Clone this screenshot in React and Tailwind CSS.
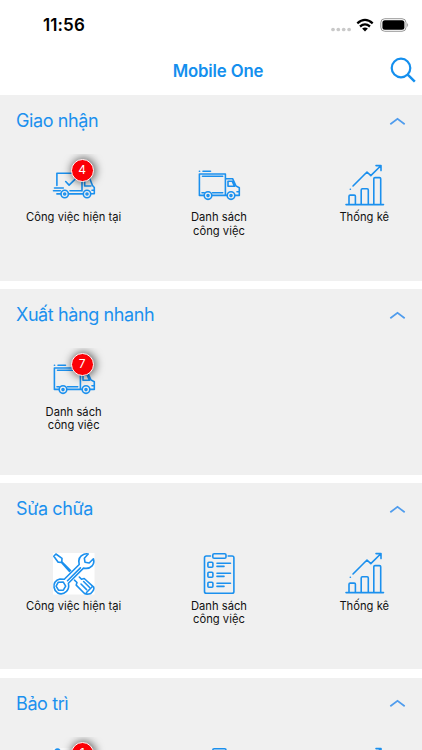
import React from 'react';

function Svg({ children }) {
  return (
    <svg viewBox="0 0 42 42" className="block h-[42px] w-[42px] overflow-visible" fill="none" stroke="#1b90ee" strokeWidth="1.6" strokeLinecap="round" strokeLinejoin="round">
      {children}
    </svg>
  );
}

function Delivery() {
  return (
    <Svg>
      <path d="M3.900 20.500V8.200H29M29 12v14M30 13h6.500l3 7.500 1.800 2v6.300h-3.400M31.700 16v5h6.200M12.700 16.500l3.400 3.600 6.400-6.200M1.500 23h8.800M.5 25.700h6.800M3.900 28.900h3.900M15.600 28.900h14.200M17 25.800h12M39 25.200h2" />
      <circle cx="11.700" cy="29" r="3.700" /><circle cx="11.700" cy="29" r="1" />
      <circle cx="34" cy="29" r="3.700" /><circle cx="34" cy="29" r="1" />
    </Svg>
  );
}

function Truck() {
  return (
    <Svg>
      <path d="M1.400 6.300h.2M5 6.300h7.500M6 30.400H1.400V9h26v21.400H14M4.500 11.200h20.200M4 27.700h2.200M14.500 27.700h10.200M27.400 13.700h7.200l3.300 7.200 3.400 1.900v7.600h-4.200M29 30.400h-1.600M30 16.300h4.200l2.200 5H30zM39 26.700h2" />
      <circle cx="10" cy="30.600" r="3.800" /><circle cx="10" cy="30.600" r="1" />
      <circle cx="33" cy="30.600" r="3.800" /><circle cx="33" cy="30.600" r="1" />
    </Svg>
  );
}

function Chart() {
  return (
    <Svg>
      <path d="M3 39.600h37.500M6 39.600V31.300q0-1.200 1.200-1.200h4q1.200 0 1.200 1.200v8.300M18.200 39.600V24.900q0-1.200 1.200-1.200h4.700q1.200 0 1.200 1.200v14.700M30.800 39.600V13.800q0-1.200 1.200-1.200h4.500q1.200 0 1.200 1.200v25.800M7.300 24.300h.1M10 21 24 7l3.800 3.600L37.800.8M33 .6h5v5" />
    </Svg>
  );
}

function Clipboard() {
  return (
    <Svg>
      <path d="M12.500 3H8.300q-1.800 0-1.800 1.800v33.600q0 1.800 1.800 1.800h25.800q1.800 0 1.800-1.800V4.800Q35.900 3 34.100 3H30.200" />
      <rect x="14.800" y=".7" width="13.200" height="4.600" rx="1.300" />
      {[11.7, 21.7, 31.7].map((y) => (
        <g key={y}>
          <rect x="9.900" y={y - 2.5} width="5" height="5" rx="1" />
          <path d={`M19 ${y - 1.5}h13.500M19 ${y + 1.7}h7`} />
        </g>
      ))}
    </Svg>
  );
}

function Tools() {
  return (
    <Svg>
      <rect width="41.500" height="41.500" fill="white" stroke="none" />
      <path d="M17.600 17.500 8.800 8.700l.2-3.400L2.900 1 .8 3.200l4.400 6.100 3.300.1 8 9.100M21.500 27.200l2.500 2.300-.8 2.600 8.300 8.400q2.500 1.200 6.300-.1 3.900-3.300 2.900-6.300L31.200 25.500l-2.700.8-2.200-2.300M28 31l5.600 5.600M30.600 28.500l5.800 5.800M33.500 39.500l5.900-6" />
      <path d="M1.100 34.500Q.2 28 7 26.100q2.700 0 4.300.1L26.200 11.500Q24.400 3.600 31 1.200q2.200-.8 4.200-.2L31.300 5.200l.7 4 4.200.8 4.200-4.200q1.300 4-1.300 7.100-3.200 3.400-8.600 2.200L15.400 30.300q1.100 5-1.900 8.100-4.500 4.100-9.100 1.300-2.700-1.800-3.300-5.200z" fill="white" />
      <path d="m5.300 29.200 5-.1 2.400 4-2.400 4.100H5.500l-2.400-4zM14.500 27.700 27.400 14.900" />
    </Svg>
  );
}

function Maintenance() {
  return (
    <Svg>
      <rect width="42" height="42" fill="#f7f7f7" stroke="none" />
      <path d="M2 4.500a2.600 2.600 0 1 1 5 0L18 17M2 4.500l12 15" strokeWidth="1.800" />
    </Svg>
  );
}

function SearchIcon() {
  return (
    <svg className="h-[26px] w-[26px]" viewBox="0 0 26 26" fill="none" stroke="#148fee" strokeWidth="2.200">
      <circle cx="11" cy="11" r="9.300" />
      <path d="m17.700 17.700 7.100 6.900" strokeWidth="2.500" />
    </svg>
  );
}

function StatusIcons() {
  return (
    <svg className="h-4 w-[80px]" viewBox="0 0 80 16">
      <g fill="#c9c9c9">
        <circle cx="3" cy="12.500" r="1.850" /><circle cx="8.300" cy="12.500" r="1.850" />
        <circle cx="13.700" cy="12.500" r="1.850" /><circle cx="19.100" cy="12.500" r="1.850" />
      </g>
      <g fill="none" stroke="black" strokeWidth="2.300">
        <path d="M27.300 6.300Q35-.5 42.700 6.300M30 9.500q5-4.200 10 0" />
      </g>
      <path d="M32.100 11.500q2.900-2 5.800 0L35 14.400z" />
      <rect x="50.800" y="1.700" width="25.200" height="12.600" rx="4" fill="none" stroke="#999" />
      <rect x="52.400" y="3.300" width="22" height="9.400" rx="2.500" />
      <path d="M77.200 6q1.900 2 0 4z" fill="#999" />
    </svg>
  );
}

const current = 'Công việc hiện tại';
const list = 'Danh sách\ncông việc';
const stats = 'Thống kê';

const sections = [
  { title: 'Giao nhận', items: [[Delivery, current, 4], [Truck, list], [Chart, stats]] },
  { title: 'Xuất hàng nhanh', items: [[Truck, list, 7]] },
  { title: 'Sửa chữa', items: [[Tools, current], [Clipboard, list], [Chart, stats]] },
  { title: 'Bảo trì', items: [[Maintenance, '', 1], [Clipboard, ''], [Chart, '']] },
];

function Item({ item: [Icon, label, count] }) {
  return (
    <div className="flex w-[145.300px] shrink-0 flex-col items-center">
      <div className="relative">
        <Icon />
        {count && (
          <div className="absolute -top-[11px] left-[4px] h-[50px] w-[56px] overflow-hidden">
            <div className="ml-[14px] mt-[5px] flex h-[23px] w-[23px] items-center justify-center rounded-full border border-white bg-[#fb0006] pb-px text-[12px] leading-none text-white shadow-[1px_0px_9px_1px_rgba(0,0,0,0.6)]">{count}</div>
          </div>
        )}
      </div>
      <div className="mt-[4.400px] whitespace-pre text-center text-[11.200px] leading-[13.300px] tracking-[0.020px] text-[#111]">{label}</div>
    </div>
  );
}

export default function App() {
  return (
    <div className="h-[750px] w-full overflow-hidden bg-white font-['Inter','Noto_Sans',sans-serif]">
      <div className="flex h-[50px] items-center justify-between pl-[43px] pr-[12px]">
        <div className="pt-[2px] text-[17px] font-semibold tracking-[0.100px] text-black">11:56</div>
        <StatusIcons />
      </div>
      <header className="grid h-[45px] grid-cols-[1fr_auto_1fr] items-start pl-[20px] pr-[6px]">
        <span />
        <h1 className="pt-[9px] text-[16.800px] font-semibold leading-[24px] tracking-[-0.150px] text-[#148fee]">Mobile One</h1>
        <div className="flex justify-end pt-[7px]"><SearchIcon /></div>
      </header>
      <main className="flex flex-col gap-[8.200px]">
        {sections.map((s) => (
          <section key={s.title} className="h-[186px] shrink-0 overflow-hidden bg-[#f0f0f0]">
            <div className="flex h-[52px] items-center justify-between pl-4 pr-[16px]">
              <h2 className="text-[18px] leading-[24px] tracking-[-0.400px] text-[#1b90ee]">{s.title}</h2>
              <svg className="h-[9px] w-[17px]" viewBox="0 0 17 9" fill="none" stroke="#4f9ced" strokeWidth="1.700"><path d="m1.300 7.300 7.200-5.500 7.200 5.500" /></svg>
            </div>
            <div className="flex pl-[1px] pt-[18px]">
              {s.items.map((item, i) => <Item key={i} item={item} />)}
            </div>
          </section>
        ))}
      </main>
    </div>
  );
}
